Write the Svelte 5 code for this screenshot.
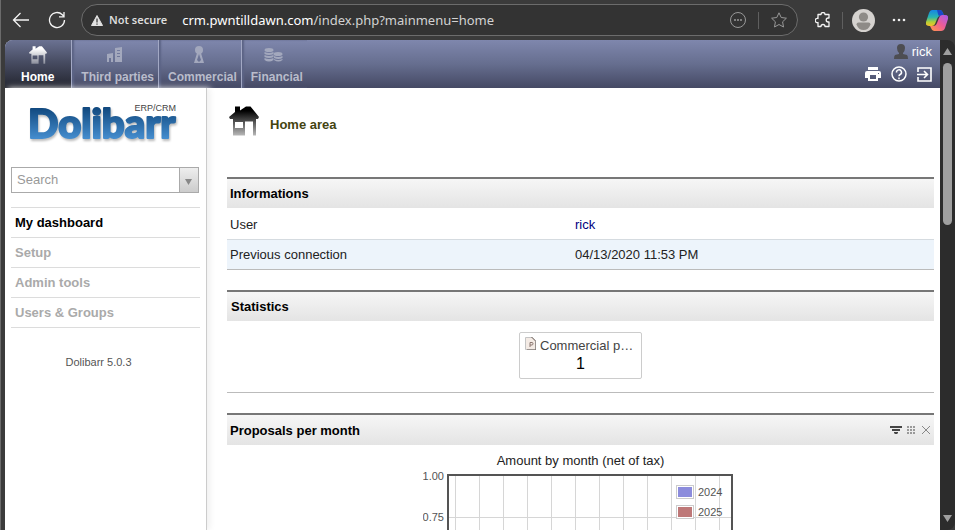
<script>
  const tabs = [
    { label: 'Third parties', icon: 'company' },
    { label: 'Commercial', icon: 'tie' },
    { label: 'Financial', icon: 'coins' }
  ];
  const menu = ['My dashboard', 'Setup', 'Admin tools', 'Users & Groups'];
  const gridX = Array.from({ length: 12 }, (_, i) => 32 + i * 24);
  const legend = [
    { year: '2024', color: '#8c8cdc' },
    { year: '2025', color: '#be7878' }
  ];
</script>

{#snippet house(id, from, to)}
  <svg class="house" viewBox="0 0 30 30" aria-hidden="true">
    <defs>
      <linearGradient {id} x1="0" y1="0" x2="0" y2="1">
        <stop offset="0" stop-color={from} />
        <stop offset=".15" stop-color={from} />
        <stop offset="1" stop-color={to} />
      </linearGradient>
    </defs>
    <path fill="url(#{id})" fill-rule="evenodd" d="M6 .5h5v4l6-4h4.500L30 11l-1 2h-2v16.500h-3V15.500h-8v14H4V13H1l-1-2 6-5zM6 16v6h8v-6z" />
  </svg>
{/snippet}

<div class="window">
  <div class="toolbar">
    <button class="tool back" aria-label="Back">
      <svg width="18" height="16" viewBox="0 0 18 16" fill="none" stroke="#f4f4f4" stroke-width="1.3"><path d="M17 8H2M8.500 1L1.500 8l7 7" /></svg>
    </button>
    <button class="tool reload" aria-label="Reload">
      <svg width="18" height="18" viewBox="0 0 18 18" fill="none" stroke="#f4f4f4" stroke-width="1.3"><path d="M16.500 9a7.500 7.500 0 1 1-2.200-5.300L16 5.500M16 1v4.800h-5" /></svg>
    </button>
    <div class="address">
      <svg width="12" height="11" viewBox="0 0 12 11"><path d="M6 .5L11.500 10.500H.5z" fill="#e2e2e2" stroke="#e2e2e2" stroke-linejoin="round" /><path d="M6 3.500v4M6 8.500v1.200" stroke="#333" stroke-width="1.200" /></svg>
      <span class="insecure">Not secure</span>
      <span class="url"><b>crm.pwntilldawn.com</b>/index.php?mainmenu=home</span>
      <button class="tool" aria-label="Page actions">
        <svg width="16" height="16" viewBox="0 0 16 16" fill="none" stroke="#999"><circle cx="8" cy="8" r="7.500" /><path d="M4 8h2M7 8h2M10 8h2" stroke-width="1.500" /></svg>
      </button>
      <i class="sep"></i>
      <button class="tool" aria-label="Add to favourites">
        <svg width="16" height="16" viewBox="0 0 16 16" fill="none" stroke="#999" stroke-linejoin="round"><path d="M8 .8l2.200 4.700 5.200.7-3.800 3.600.9 5.200L8 12.500 3.500 15l.9-5.200L.6 6.200l5.200-.7z" /></svg>
      </button>
    </div>
    <button class="tool ext" aria-label="Extensions">
      <svg width="16" height="16" viewBox="0 0 16 16" fill="none" stroke="#f4f4f4" stroke-width="1.300" stroke-linejoin="round"><path d="M3 2.500h3a2 2 0 0 1 4 0h4v3.500h-.8a2 2 0 0 0 0 4h.8v4.500h-4a2 2 0 0 0-4 0H3v-4a2.100 2.100 0 1 1 0-4z" /></svg>
    </button>
    <i class="sep"></i>
    <button class="tool profile" aria-label="Profile">
      <svg width="23" height="23" viewBox="0 0 23 23"><circle cx="11.500" cy="11.500" r="11.500" fill="#d5d2cf" /><circle cx="11.500" cy="8" r="4.600" fill="#8e8b87" /><path d="M4.500 15.500q0-2 2-2h10q2 0 2 2-2 5.500-7 5.500t-7-5.500z" fill="#8e8b87" /></svg>
    </button>
    <button class="tool more" aria-label="More">
      <svg width="14" height="4" viewBox="0 0 14 4" fill="#eee"><circle cx="2" cy="2" r="1.300" /><circle cx="7" cy="2" r="1.300" /><circle cx="12" cy="2" r="1.300" /></svg>
    </button>
    <button class="tool" aria-label="Copilot">
      <svg width="22" height="21" viewBox="0 0 22 21">
        <defs>
          <linearGradient id="cpA" x1="0" y1="0" x2="0" y2="1"><stop offset="0" stop-color="#1685e5" /><stop offset=".45" stop-color="#28b5b0" /><stop offset=".75" stop-color="#b4cf35" /><stop offset="1" stop-color="#f5c02c" /></linearGradient>
          <linearGradient id="cpB" x1="1" y1="0" x2="0" y2="1"><stop offset="0" stop-color="#a45cf0" /><stop offset=".5" stop-color="#ee5d94" /><stop offset="1" stop-color="#ff9a45" /></linearGradient>
        </defs>
        <path d="M6 0h8q2 0 3 3l1 3h-4q-2 0-3 3l-2 5q-1 2-3 2H3q-4 0-3-4L3 3q1-3 3-3z" fill="url(#cpA)" />
        <path d="M11 0h3q2 0 3 3l1 3h-4q-2 0-2-2z" fill="#1b48c8" />
        <path d="M16 5h3q4 0 3 4l-3 9q-1 3-4 3H8q-2 0-3-3l-1-2h3q3 0 4-3l2-5q1-3 3-3z" fill="url(#cpB)" />
      </svg>
    </button>
  </div>

  <div class="viewport">
    <div class="page">
      <header>
        <nav class="tabs">
          <a href="#home" class="tab active">
            <span class="ico">{@render house('hw', '#ffffff', '#8a8d9b')}</span>Home
          </a>
          {#each tabs as tab}
            <a href="#{tab.icon}" class="tab">
              <span class="ico">
                {#if tab.icon === 'company'}
                  <svg width="18" height="16" viewBox="0 0 18 16"><path fill="currentColor" fill-rule="evenodd" d="M9 1l7-1v15H9zm2 2v1h3V3zm0 3v1h3V6zm0 3v1h3V9zM1 7l6-1v9H5v-4H3v4H1z" /></svg>
                {:else if tab.icon === 'tie'}
                  <svg width="12" height="18" viewBox="0 0 12 18"><circle cx="6" cy="4" r="4" fill="currentColor" /><path fill="currentColor" fill-rule="evenodd" d="M4 7h4l3 10H1zm2 1l-2 6 2 2 2-2z" /></svg>
                {:else}
                  <svg width="19" height="14" viewBox="0 0 19 14"><g fill="currentColor"><ellipse cx="5" cy="2" rx="4.500" ry="2" /><path d="M.5 4q4.500 2 9 0v2q-4.500 2-9 0zM.5 7q4.500 2 9 0v2q-4.500 2-9 0zM.5 10q4.500 2 9 0v2q-4.500 3-9 0z" /><ellipse cx="14" cy="6" rx="4.500" ry="2" /><path d="M10 8q4 2 8.500 0v2q-4 2-8.500 0zM10 11q4 2 8.500 0v1q-4 3-8.500 0z" /></g></svg>
                {/if}
              </span>{tab.label}
            </a>
          {/each}
        </nav>
        <div class="account">
          <a href="#user" class="user">
            <svg width="14" height="16" viewBox="0 0 14 16"><path d="M7 0q4 0 4 4 0 3-2 5v1l4 1q1 1 1 4H0q0-3 1-4l4-1V9Q3 7 3 4q0-4 4-4z" fill="#4d4d52" /></svg>rick
          </a>
          <div class="actions">
            <a href="#print" aria-label="Print"><svg width="16" height="14" viewBox="0 0 16 14" fill="#fff"><path d="M3 0h10v3H3z" /><path fill-rule="evenodd" d="M2 4h12q2 0 2 2v5h-3v3H3v-3H0V6q0-2 2-2zm3 4v4h6V8zm8-2v1h1V6z" /></svg></a>
            <a href="#help" aria-label="Help"><svg width="16" height="16" viewBox="0 0 16 16" fill="none" stroke="#fff" stroke-width="1.500"><circle cx="8" cy="8" r="7" /><path d="M5.500 6.500a2.500 2.500 0 1 1 3.700 2Q8 9.200 8 10.300M8 11.500v1.700" /></svg></a>
            <a href="#logout" aria-label="Logout"><svg width="15" height="15" viewBox="0 0 15 15" fill="none" stroke="#fff" stroke-width="1.600"><path d="M1 5V1h13v13H1v-4M0 7.500h10M7 4l3.500 3.500L7 11" /></svg></a>
          </div>
        </div>
      </header>

      <div class="body">
        <aside>
          <svg class="logo" width="188" height="65" viewBox="0 0 188 65" role="img" aria-label="Dolibarr ERP/CRM">
            <defs>
              <linearGradient id="brand" gradientUnits="userSpaceOnUse" x1="0" y1="6" x2="0" y2="38">
                <stop offset="0" stop-color="#11497f" />
                <stop offset="1" stop-color="#4790d2" />
              </linearGradient>
            </defs>
            <text class="wordmark" x="17" y="36" fill="url(#brand)" stroke="url(#brand)">Dolibarr</text>
            <text class="tagline" x="165" y="9" text-anchor="end">ERP/CRM</text>
          </svg>
          <div class="search">
            <input type="text" placeholder="Search" aria-label="Search" />
            <button aria-label="Search options"><svg width="7" height="6" viewBox="0 0 7 6"><path d="M0 0h7L3.500 6z" fill="#888" /></svg></button>
          </div>
          <nav class="menu">
            {#each menu as item, i}
              <a href="#menu-{i}" class:current={i === 0}>{item}</a>
            {/each}
          </nav>
          <p class="version">Dolibarr 5.0.3</p>
        </aside>

        <main>
          <h1>{@render house('hb', '#000000', '#b8b8b8')}<span>Home area</span></h1>

          <table class="box info">
            <colgroup><col class="key" /><col /></colgroup>
            <thead><tr><th colspan="2">Informations</th></tr></thead>
            <tbody>
              <tr><td>User</td><td><a href="#rick">rick</a></td></tr>
              <tr><td>Previous connection</td><td>04/13/2020 11:53 PM</td></tr>
            </tbody>
          </table>

          <section class="box stats">
            <h2>Statistics</h2>
            <a href="#proposals" class="stat">
              <span class="statname">
                <svg width="11" height="13" viewBox="0 0 11 13"><path d="M.5.5h7l3 3v9H.5z" fill="#f4ebe5" stroke="#c4c4c4" /><path d="M6.500 0L11 4.500V13H2" fill="none" stroke="#71625d" /><path d="M5 10V5.500h2q1 0 1 1.200T7 8H5" fill="none" stroke="#8c7770" /></svg>
                <span>Commercial p…</span>
              </span>
              <span class="num">1</span>
            </a>
          </section>

          <section class="box chartbox">
            <h2>Proposals per month
              <span class="tools">
                <svg width="12" height="9" viewBox="0 0 12 9"><path d="M0 0h12v2H0zM2 3h8v2H2zM4 6h4v1L7 8H5L4 7z" fill="#444" /></svg>
                <svg width="9" height="9" viewBox="0 0 9 9" fill="#999">
                  {#each [0, 3, 6] as y}{#each [0, 3, 6] as x}<rect {x} {y} width="2" height="2" />{/each}{/each}
                </svg>
                <svg width="10" height="10" viewBox="0 0 10 10"><path d="M1 1l8 8M9 1L1 9" stroke="#888" /></svg>
              </span>
            </h2>
            <div class="charttitle">Amount by month (net of tax)</div>
            <svg class="chart" width="315" height="200" viewBox="0 0 315 200">
              <g stroke="#d6d6d6">
                {#each gridX as x}<path d="M{x + 0.5} 7v193" />{/each}
                <path d="M26 49.500h283" />
              </g>
              <path d="M25 200V7h284v193" fill="none" stroke="#545454" stroke-width="2" />
              <g class="axis">
                <text x="21" y="12" text-anchor="end">1.00</text>
                <text x="21" y="53" text-anchor="end">0.75</text>
                {#each legend as item, i}
                  <rect x="253.500" y={17.5 + i * 20} width="17" height="13" fill="#fff" stroke="#ccc" />
                  <rect x="255" y={19 + i * 20} width="14" height="10" fill={item.color} />
                  <text x="275" y={28 + i * 20}>{item.year}</text>
                {/each}
              </g>
            </svg>
          </section>
        </main>
      </div>
    </div>

    <div class="scrollbar" aria-hidden="true">
      <svg width="9" height="7" viewBox="0 0 9 7"><path d="M4.500 0L9 7H0z" fill="#9f9f9f" /></svg>
      <i></i>
      <svg width="9" height="7" viewBox="0 0 9 7"><path d="M4.500 7L9 0H0z" fill="#9f9f9f" /></svg>
    </div>
  </div>
</div>

<style>
  :global(body) { margin: 0; background: #3b3b3b; }
  * { box-sizing: border-box; }
  svg { display: block; flex: none; }
  a { text-decoration: none; color: inherit; }
  .window { height: 100vh; display: flex; flex-direction: column; overflow: hidden; border-left: 1px solid #6b6b6b; font: 13px/16px "Liberation Sans", Arial, sans-serif; color: #222; }
  .toolbar { height: 40px; flex: none; display: flex; align-items: center; padding: 0 7px 0 11px; color: #eee; }
  .tool { border: 0; background: none; padding: 0; display: flex; align-items: center; }
  .reload { margin: 0 15px 0 18px; }
  .address { flex: 1; min-width: 0; height: 32px; display: flex; align-items: center; padding: 0 10px 0 9px; border: 1px solid #6c6c6c; border-radius: 16px; background: #333; font-family: "Noto Sans", sans-serif; }
  .insecure { font-size: 11px; font-weight: 600; color: #ddd; margin: 0 15px 0 6px; white-space: nowrap; }
  .url { flex: 1; font-size: 13px; color: #d2d2d2; white-space: nowrap; overflow: hidden; }
  .url b { font-weight: 400; color: #fff; }
  .sep { width: 1px; height: 17px; background: #5f5f5f; margin: 0 12px; flex: none; }
  .ext { margin-left: 17px; }
  .ext + .sep { margin: 0 9px 0 11px; }
  .more { margin: 0 20px 0 17px; }

  .viewport { flex: 1; min-height: 0; display: flex; margin-left: 4px; border-top-left-radius: 8px; overflow: hidden; }
  .page { flex: 1; min-width: 0; background: #fff; display: flex; flex-direction: column; }
  .scrollbar { width: 15px; flex: none; background: #2c2c2c; display: flex; flex-direction: column; align-items: center; padding: 8px 0; border-radius: 0 8px 8px 0; }
  .scrollbar i { width: 9px; height: 162px; margin: 8px 0 auto; border-radius: 5px; background: #9f9f9f; }

  header { height: 48px; flex: none; display: flex; justify-content: space-between; background: linear-gradient(#7f87ad, #666e8f 50%, #454964); }
  .tabs { display: flex; font-size: 12px; font-weight: bold; }
  .tab { display: flex; flex-direction: column; align-items: center; padding: 5px 4px 0 9px; color: #b9bccb; border-left: 1px solid #a2a8c4; white-space: nowrap; box-shadow: inset 2px 0 2px #5c6485; }
  .tab svg { color: #a3a8bd; }
  .tab.active { padding: 5px 17px 0 16px; color: #fff; border-left: 0; box-shadow: none; background: linear-gradient(#6b7292, #484d63 45%, #23252f); }
  .ico { height: 24px; display: flex; align-items: center; padding: 0 6px 4px 0; }
  .active .ico { padding-right: 0; }
  .house { width: 30px; height: 30px; margin-top: 1px; }
  .ico .house { width: 18px; height: 18px; margin-top: 0; }
  .account { padding: 4px 8px 0 0; display: flex; flex-direction: column; align-items: flex-end; gap: 6px; color: #fff; }
  .user { display: flex; gap: 4px; }
  .actions { display: flex; align-items: center; gap: 10px; }

  .body { flex: 1; min-height: 0; display: flex; }
  aside { width: 202px; flex: none; padding: 14px 6px 0; border-right: 1px solid #ccc; box-shadow: 3px 0 6px #f0f0f0; }
  .logo { overflow: visible; }
  .wordmark { font: 900 40px Lato, sans-serif; stroke-width: 2px; stroke-linejoin: round; filter: drop-shadow(1px 2px 1px #bbb); }
  .tagline { font-size: 9px; fill: #444; }
  .search { display: flex; height: 26px; width: 188px; border: 1px solid #aaa; }
  .search input { flex: 1; min-width: 0; border: 0; padding: 0 5px; font: inherit; outline: 0; }
  .search input::placeholder { color: #999; opacity: 1; }
  .search button { width: 19px; padding: 4px 2px 0 0; border: 0; border-left: 1px solid #aaa; background: linear-gradient(#eee, #ccc); display: flex; align-items: center; justify-content: center; }
  .menu { margin-top: 14px; border-top: 1px solid #dcdcdc; font-weight: bold; }
  .menu a { display: block; height: 30px; padding: 7px 4px 6px; border-bottom: 1px solid #dcdcdc; color: #aaa; }
  .menu a.current { color: #000; }
  .version { margin: 26px 0 0; padding-right: 14px; text-align: center; font-size: 11px; color: #555; }

  main { flex: 1; min-width: 0; padding: 17px 6px 0 20px; display: flex; flex-direction: column; }
  h1 { margin: 0 0 36px; padding-left: 2px; display: flex; gap: 11px; align-items: flex-start; font-size: 13px; line-height: 16px; color: #444411; }
  h1 span { padding: 12px 0 8px; }
  .box { border-top: 2px solid #777; border-bottom: 1px solid #bbb; width: 100%; flex: none; margin-bottom: 20px; }
  .info { border-collapse: separate; border-spacing: 0; table-layout: fixed; text-align: left; }
  .key { width: 348px; }
  th, h2 { height: 29px; padding: 0 3px; margin: 0; font-size: 13px; line-height: 29px; font-weight: bold; color: #000; background: linear-gradient(#f6f6f6, #e4e4e4); }
  .info td { height: 31px; padding: 2px 3px 0; }
  .info td:last-child { padding-left: 0; }
  .info tr + tr td { height: 30px; padding: 0 3px; border-top: 1px solid #d5dbe0; background: #edf4fb; }
  .info tr + tr td:last-child { padding-left: 0; }
  .info a { color: #000080; }
  .stats { height: 103px; }
  .stats h2 { padding-left: 4px; }
  .stat { display: flex; flex-direction: column; align-items: center; width: 123px; height: 47px; margin: 11px auto 0; padding: 4px 5px; border: 1px solid #ccc; border-radius: 2px; color: #444; }
  .statname { width: 100%; display: flex; gap: 4px; line-height: 17px; white-space: nowrap; }
  .num { font-size: 16px; line-height: 20px; color: #000; }
  .chartbox h2 { display: flex; justify-content: space-between; height: 30px; line-height: 32px; }
  .tools { display: flex; gap: 5px; align-items: center; }
  .charttitle { text-align: center; line-height: 24px; margin-top: 4px; }
  .chart { margin: -5px auto 0; }
  .axis { font-size: 11px; fill: #545454; }
</style>
